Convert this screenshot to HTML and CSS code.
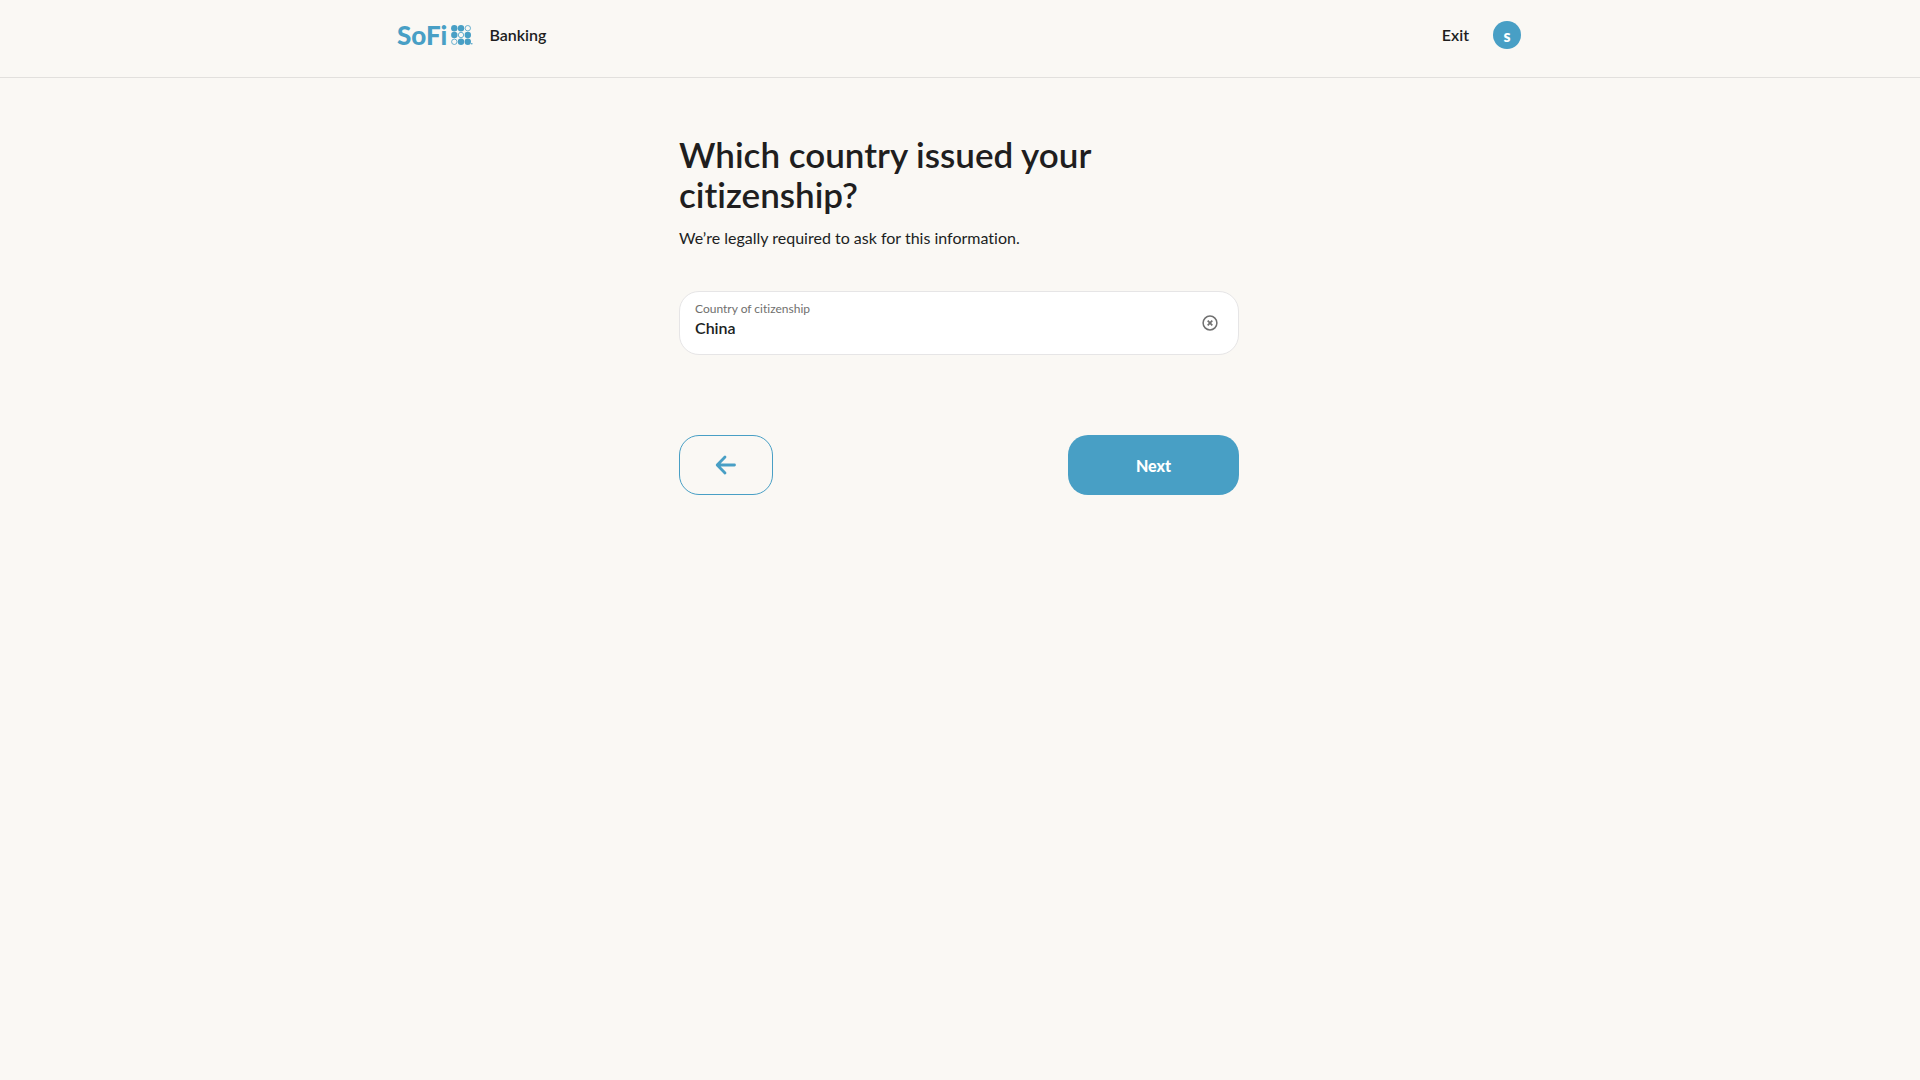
FILE: index.html
```html
<!DOCTYPE html>
<html lang="en">
<head>
  <meta charset="UTF-8">
  <meta name="viewport" content="width=device-width, initial-scale=1.0">
  <title>SoFi Banking</title>
  <link rel="stylesheet" href="styles.css">
</head>
<body>
  <header class="header">
    <div class="header-inner">
      <a class="brand" href="#">
        <span class="logo-text">SoFi</span>
        <svg class="logo-mark" width="22" height="20" viewBox="0 0 22 20" aria-hidden="true">
          <g fill="#489fc5">
            <circle cx="3.3" cy="3.2" r="3.2"/>
            <circle cx="10" cy="3.2" r="3.2"/>
            <circle cx="3.3" cy="10" r="3.2"/>
            <circle cx="16.8" cy="10" r="3.2"/>
            <circle cx="10" cy="16.8" r="3.2"/>
            <circle cx="16.8" cy="16.8" r="3.2"/>
            <circle cx="20.8" cy="18.8" r="0.8"/>
          </g>
          <g fill="none" stroke="#489fc5" stroke-width="0.8">
            <circle cx="16.8" cy="3.2" r="2.7"/>
            <circle cx="10" cy="10" r="2.7"/>
            <circle cx="3.3" cy="16.8" r="2.7"/>
          </g>
        </svg>
        <span class="product">Banking</span>
      </a>
      <nav class="header-nav">
        <a class="exit" href="#">Exit</a>
        <button class="avatar" type="button" aria-label="Account">s</button>
      </nav>
    </div>
  </header>

  <main class="content">
    <h1>Which country issued your citizenship?</h1>
    <p class="subtitle">We’re legally required to ask for this information.</p>

    <form>
      <div class="field">
        <div class="field-text">
          <label for="country">Country of citizenship</label>
          <input type="text" id="country" name="country" value="China">
        </div>
        <button class="clear" type="button" aria-label="Clear">
          <svg width="16" height="16" viewBox="0 0 16 16" fill="none" stroke="#707070" stroke-width="1.5">
            <circle cx="8" cy="8" r="6.9"/>
            <path d="M5.7 5.7l4.6 4.6M10.3 5.7l-4.6 4.6" stroke-width="1.7"/>
          </svg>
        </button>
      </div>

      <div class="actions">
        <button class="button back" type="button" aria-label="Back">
          <svg width="22" height="20" viewBox="0 0 22 20" fill="none" stroke="#489fc5" stroke-width="2.8" stroke-linecap="round" stroke-linejoin="round">
            <path d="M19.5 10H2.4M10 2L2.2 10l7.8 8"/>
          </svg>
        </button>
        <button class="button next" type="submit">Next</button>
      </div>
    </form>
  </main>
</body>
</html>
```
FILE: styles.css
```css
* {
  box-sizing: border-box;
}

body {
  margin: 0;
  font-family: Lato, "Liberation Sans", sans-serif;
  font-size: 16px;
  line-height: 24px;
  font-variant-ligatures: none;
  background: #faf8f4;
  color: #201e1e;
}

a {
  color: inherit;
  text-decoration: none;
}

button {
  padding: 0;
  border: none;
  font-family: inherit;
  cursor: pointer;
}

/* Header */
.header {
  height: 78px;
  border-bottom: 1px solid #e2e0dd;
}

.header-inner {
  display: flex;
  justify-content: space-between;
  align-items: center;
  max-width: 1174px;
  height: 70px;
  margin: 0 auto;
  padding: 0 26px 0 24px;
}

.brand,
.header-nav {
  display: flex;
  align-items: center;
}

.logo-text {
  font-size: 26px;
  font-weight: 900;
  color: #489fc5;
}

.logo-mark {
  margin-left: 4px;
}

.product {
  margin-left: 16px;
  font-weight: 600;
}

.header-nav {
  gap: 24px;
}

.exit {
  font-weight: 600;
}

.avatar {
  width: 28px;
  height: 28px;
  border-radius: 50%;
  background: #489fc5;
  color: white;
  font-size: 16px;
  font-weight: 900;
}

/* Form */
.content {
  max-width: 610px;
  margin: 0 auto;
  padding: 56px 26px 56px 24px;
}

h1 {
  margin: 0;
  font-size: 35px;
  line-height: 40px;
  font-weight: 600;
}

.subtitle {
  margin: 12px 0 41px;
}

.field {
  display: flex;
  justify-content: space-between;
  align-items: center;
  height: 64px;
  padding: 0 20px 0 15px;
  border: 1px solid #e6e5e6;
  border-radius: 20px;
  background: white;
}

.field-text {
  flex: 1;
  padding-bottom: 8px;
}

.field label {
  display: block;
  font-size: 12px;
  line-height: 16px;
  color: #706f6e;
}

.field input {
  display: block;
  width: 100%;
  height: 20px;
  padding: 0;
  border: none;
  outline: none;
  background: none;
  font-family: inherit;
  font-size: 16px;
  font-weight: 600;
  color: #201e1e;
}

.clear {
  display: flex;
  background: none;
}

.actions {
  display: flex;
  justify-content: space-between;
  margin-top: 80px;
}

.button {
  display: flex;
  justify-content: center;
  align-items: center;
  height: 60px;
  border-radius: 20px;
}

.back {
  width: 94px;
  border: 1px solid #489fc5;
  background: none;
}

.next {
  width: 171px;
  background: #489fc5;
  color: white;
  font-size: 16px;
  font-weight: 900;
}
```
